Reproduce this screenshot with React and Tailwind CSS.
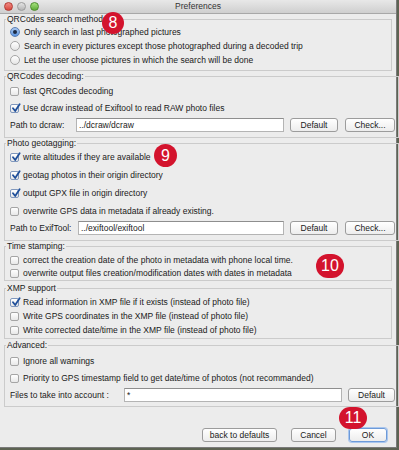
import React from 'react';

function Check({ checked }) {
  return (
    <span
      className={`relative w-[9px] h-[9px] rounded-[2px] border shrink-0 bg-gradient-to-b from-white to-[#e8e8e8] ${
        checked ? 'border-[#7f97bd]' : 'border-[#a5a5a5]'
      }`}
    >
      {checked && (
        <svg viewBox="0 0 10 10" className="absolute left-[0px] top-[-2px] w-[10px] h-[10px]">
          <path d="M2 5.2 L4.2 8 L8.6 1.2" fill="none" stroke="#1f4f9a" strokeWidth="1.8" strokeLinecap="round" strokeLinejoin="round" />
        </svg>
      )}
    </span>
  );
}

function Radio({ checked }) {
  return (
    <span
      className={`w-[10px] h-[10px] rounded-full border shrink-0 flex items-center justify-center ${
        checked ? 'border-[#5a7fb5] bg-gradient-to-b from-[#a9c8f0] to-[#5b93df]' : 'border-[#a5a5a5] bg-gradient-to-b from-white to-[#e6e6e6]'
      }`}
    >
      {checked && <span className="w-[4px] h-[4px] rounded-full bg-[#1b2a44]" />}
    </span>
  );
}

function Item({ type = 'check', checked, label, h = 'h-[14px]' }) {
  return (
    <div className={`flex items-center gap-[4px] ${h}`}>
      {type === 'radio' ? <Radio checked={checked} /> : <Check checked={checked} />}
      <span className="whitespace-nowrap">{label}</span>
    </div>
  );
}

function Button({ children, className = '', focus }) {
  return (
    <button
      className={`h-[14px] rounded-[3px] border bg-gradient-to-b from-white to-[#ededed] text-[8.5px] leading-none flex items-center justify-center ${
        focus ? 'border-[#6d9ad8] shadow-[0_0_0_1px_#a9c6ee]' : 'border-[#9c9c9c]'
      } ${className}`}
    >
      {children}
    </button>
  );
}

function Input({ value, className = '' }) {
  return (
    <div className={`h-[14px] bg-white border border-[#b4b4b4] border-t-[#8e8e8e] px-[2px] flex items-center ${className}`}>
      {value}
    </div>
  );
}

function Group({ title, className = '', children }) {
  return (
    <fieldset className={`border border-[#cbcbcb] pl-[5px] pr-[3px] ${className}`}>
      <legend className="ml-[-4px] px-[1px] h-[10px] leading-[10px]">{title}</legend>
      {children}
    </fieldset>
  );
}

function Badge({ n, className }) {
  return (
    <div
      className={`absolute rounded-full bg-[#d3132d] text-white flex items-center justify-center text-[16px] leading-none font-['Liberation_Sans',sans-serif] ${className}`}
    >
      {n}
    </div>
  );
}

export default function App() {
  return (
    <div className="w-[399px] h-[450px] bg-[#5d6352] relative font-['Liberation_Sans',Arial,sans-serif] text-[8.5px] text-[#1a1a1a]">
      <div className="w-[397px] h-[448px] bg-[#ececec] border-r border-b border-[#7a7a7a] flex flex-col">
        <div className="h-[14px] shrink-0 bg-gradient-to-b from-[#e8e8e8] to-[#cfcfcf] border-b border-[#a8a8a8] relative flex items-center justify-center">
          <div className="absolute left-[4px] top-[2px] flex gap-[4px]">
            <span className="w-[9px] h-[9px] rounded-full bg-gradient-to-b from-[#f08a84] to-[#d8463d] border border-[#b23a33]" />
            <span className="w-[9px] h-[9px] rounded-full bg-gradient-to-b from-[#e4e4e4] to-[#b5b5b5] border border-[#9b9b9b]" />
            <span className="w-[9px] h-[9px] rounded-full bg-gradient-to-b from-[#a6e27d] to-[#5cab35] border border-[#4c8c2c]" />
          </div>
          <span className="text-[8.5px] text-[#333]">Preferences</span>
        </div>

        <div className="flex flex-col pl-[4px] pr-[4px]">
          <Group title="QRCodes search method:" className="pb-[3px]">
            <div className="pt-[1px]">
              <Item type="radio" checked label="Only search in last photographed pictures" />
              <Item type="radio" label="Search in every pictures except those photographed during a decoded trip" />
              <Item type="radio" label="Let the user choose pictures in which the search will be done" />
            </div>
          </Group>

          <Group title="QRCodes decoding:" className="pb-[4px]">
            <Item label="fast QRCodes decoding" h="h-[18px] mt-[1px]" />
            <Item checked label="Use dcraw instead of Exiftool to read RAW photo files" h="h-[17px]" />
            <div className="flex items-center h-[16px]">
              <span className="w-[66px] shrink-0">Path to dcraw:</span>
              <Input value="../dcraw/dcraw" className="w-[208px]" />
              <Button className="w-[48px] ml-[6px]">Default</Button>
              <Button className="w-[50px] ml-[7px]">Check...</Button>
            </div>
          </Group>

          <Group title="Photo geotagging:" className="pb-[4px]">
            <Item checked label="write altitudes if they are available" h="h-[18px]" />
            <Item checked label="geotag photos in their origin directory" h="h-[18px]" />
            <Item checked label="output GPX file in origin directory" h="h-[18px]" />
            <Item label="overwrite GPS data in metadata if already existing." h="h-[18px]" />
            <div className="flex items-center h-[16px]">
              <span className="w-[68px] shrink-0">Path to ExifTool:</span>
              <Input value="../exiftool/exiftool" className="w-[206px]" />
              <Button className="w-[48px] ml-[6px]">Default</Button>
              <Button className="w-[50px] ml-[7px]">Check...</Button>
            </div>
          </Group>

          <Group title="Time stamping:" className="pb-[0px]">
            <div className="pt-[3px]">
              <Item label="correct the creation date of the photo in metadata with phone local time." h="h-[13px]" />
              <Item label="overwrite output files creation/modification dates with dates in metadata" h="h-[13px]" />
            </div>
          </Group>

          <Group title="XMP support" className="pb-[1px] mt-[2px]">
            <div className="pt-[2px]">
              <Item checked label="Read information in XMP file if it exists (instead of photo file)" />
              <Item label="Write GPS coordinates in the XMP file (instead of photo file)" />
              <Item label="Write corrected date/time in the XMP file (instead of photo file)" />
            </div>
          </Group>

          <Group title="Advanced:" className="pb-[3px] mt-[1px]">
            <Item label="Ignore all warnings" h="h-[16px] mt-[3px]" />
            <Item label="Priority to GPS timestamp field to get date/time of photos (not recommanded)" h="h-[16px] mt-[1px]" />
            <div className="flex items-center h-[16px] mt-[1px]">
              <span className="w-[114px] shrink-0">Files to take into account :</span>
              <Input value="*" className="w-[218px]" />
              <Button className="w-[47px] ml-[6px]">Default</Button>
            </div>
          </Group>

          <div className="flex justify-end items-center mt-[21px] pr-[5px]">
            <Button className="w-[75px]">back to defaults</Button>
            <Button className="w-[45px] ml-[14px]">Cancel</Button>
            <Button focus className="w-[38px] ml-[13px]">OK</Button>
          </div>
        </div>
      </div>

      <Badge n="8" className="left-[102px] top-[12px] w-[22px] h-[22px]" />
      <Badge n="9" className="left-[154px] top-[144px] w-[23px] h-[23px]" />
      <Badge n="10" className="left-[316px] top-[254px] w-[28px] h-[24px]" />
      <Badge n="11" className="left-[339px] top-[407px] w-[28px] h-[22px]" />
    </div>
  );
}
